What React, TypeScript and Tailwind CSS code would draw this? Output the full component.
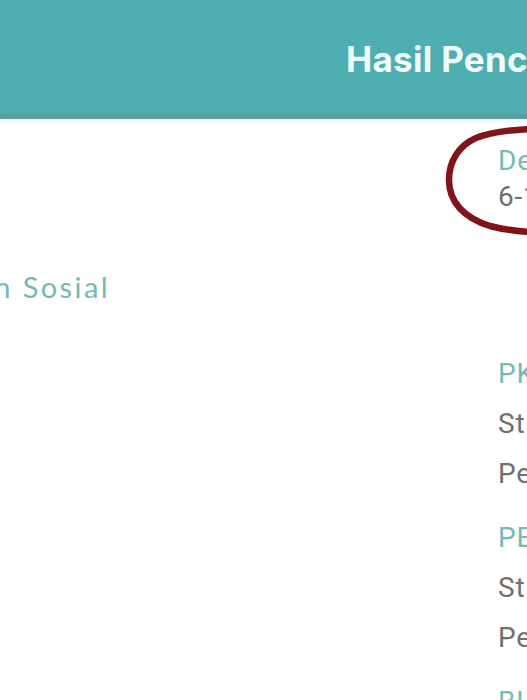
import React from 'react';

interface BansosRow {
    program: string;
    status: string;
    periode: string;
}

const rows: BansosRow[] = [
    { program: 'PKH', status: 'Status: Ya', periode: 'Periode: Okt - Des 2023' },
    { program: 'PBI JK', status: 'Status: Ya', periode: 'Periode: Des 2023' },
];

// marker-style circle drawn around the desil info
function MarkerCircle() {
    return (
        <svg
            className="absolute left-[440px] top-[122px] pointer-events-none"
            width="200"
            height="120"
            viewBox="0 0 200 120"
            fill="none"
        >
            <path
                d="M150 8 C110 5 60 6 36 16 C18 24 9 40 9 58 C9 80 24 96 50 104 C80 112 120 112 160 110"
                stroke="#7f1518"
                strokeWidth={6.5}
                strokeLinecap="round"
            />
        </svg>
    );
}

export default function App() {
    return (
        <div className="relative w-[527px] h-[700px] overflow-hidden bg-white">
            <header className="h-[119px] bg-[#4fafb0] border-b-[5px] border-[#5d9d9f] shadow-[0_2px_4px_rgba(79,175,176,0.15)] flex items-center pl-[346px] whitespace-nowrap">
                <h1 className="text-[35px] font-bold text-[#f0fbfb] tracking-[0.3px] font-['Inter',sans-serif] pt-[5px]">
                    Hasil Pencarian Bansos
                </h1>
            </header>

            <div className="flex">
                <div className="w-[498px] shrink-0 flex justify-end pr-[388px] pt-[150px]">
                    <p className="whitespace-nowrap text-[29px] leading-[36px] tracking-[2.4px] text-[#72bab6] font-['Lato',sans-serif]">
                        Kementerian Sosial
                    </p>
                </div>

                <div className="shrink-0 whitespace-nowrap font-['Roboto',sans-serif] text-[28px] tracking-[0.8px] pt-[24px]">
                    <div className="leading-[36px]">
                        <p className="text-[#6fbdb5]">Desil</p>
                        <p className="text-[#707070]">6-10 %</p>
                    </div>

                    <div className="mt-[134px] flex flex-col gap-[14px]">
                        {rows.map((row, i) => (
                            <div key={i} className="leading-[50px]">
                                <p className="text-[#6fbdb5]">{row.program}</p>
                                <p className="text-[#707070]">{row.status}</p>
                                <p className="text-[#707070]">{row.periode}</p>
                            </div>
                        ))}
                        <p className="leading-[50px] text-[#6fbdb5]">BLT</p>
                    </div>
                </div>
            </div>

            <MarkerCircle />
        </div>
    );
}
